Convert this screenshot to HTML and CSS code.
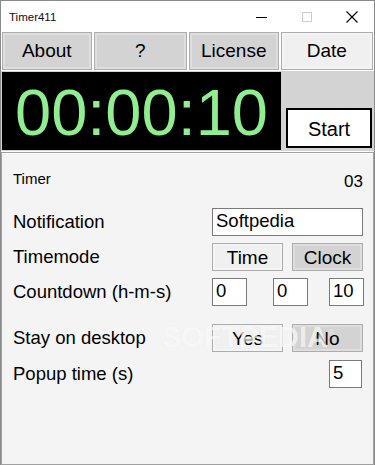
FILE: index.html
```html
<!DOCTYPE html>
<html lang="en">
<head>
  <meta charset="UTF-8">
  <title>Timer411</title>
  <link rel="stylesheet" href="styles.css">
</head>
<body>
  <div class="window">
    <div class="titlebar">
      <span class="title">Timer411</span>
      <div class="caption-buttons">
        <span class="cap-btn">
          <svg width="12" height="12" viewBox="0 0 12 12"><path d="M0 6.5h11" stroke="#000" stroke-width="1"/></svg>
        </span>
        <span class="cap-btn">
          <svg width="12" height="12" viewBox="0 0 12 12"><rect x="1.5" y="1.5" width="9" height="9" fill="none" stroke="#cccccc" stroke-width="1"/></svg>
        </span>
        <span class="cap-btn">
          <svg width="12" height="12" viewBox="0 0 12 12"><path d="M0.5 0.5l11 11M11.5 0.5l-11 11" stroke="#000" stroke-width="1.1"/></svg>
        </span>
      </div>
    </div>

    <div class="menu-row">
      <button class="btn menu-btn w-about">About</button>
      <button class="btn menu-btn w-help">?</button>
      <button class="btn menu-btn w-license">License</button>
      <button class="btn menu-btn light w-date">Date</button>
    </div>

    <div class="display-row">
      <div class="clock">00:00:10</div>
      <div class="start-area">
        <button class="start-btn">Start</button>
      </div>
    </div>

    <div class="panel">
      <div class="row row-timer">
        <span class="small-label">Timer</span>
        <span class="timer-no">03</span>
      </div>

      <div class="row">
        <span class="label">Notification</span>
        <input class="field wide" type="text" value="Softpedia">
      </div>

      <div class="row">
        <span class="label">Timemode</span>
        <div class="pair">
          <button class="btn toggle light">Time</button>
          <button class="btn toggle">Clock</button>
        </div>
      </div>

      <div class="row">
        <span class="label">Countdown (h-m-s)</span>
        <div class="hms">
          <input class="field small" type="text" value="0">
          <input class="field small mid" type="text" value="0">
          <input class="field small last" type="text" value="10">
        </div>
      </div>

      <div class="row row-gap">
        <span class="label">Stay on desktop</span>
        <div class="pair">
          <button class="btn toggle light">Yes</button>
          <button class="btn toggle">No</button>
        </div>
      </div>

      <div class="row row-popup">
        <span class="label">Popup time (s)</span>
        <input class="field popup" type="text" value="5">
      </div>

      <div class="watermark">SOFTPEDIA<sup>®</sup></div>
    </div>
  </div>
</body>
</html>
```

FILE: styles.css
```css
body {
  margin: 0;
  font-family: "Liberation Sans", Arial, sans-serif;
  background: #ffffff;
}

.window {
  width: 375px;
  height: 465px;
  box-sizing: border-box;
  border: 1px solid #8a8a8a;
  border-bottom: none;
  background: #ffffff;
  display: flex;
  flex-direction: column;
}

/* title bar */
.titlebar {
  height: 31px;
  display: flex;
  align-items: center;
  justify-content: space-between;
  padding-left: 8px;
}

.title {
  font-size: 11.5px;
  color: #1a0a14;
}

.caption-buttons {
  display: flex;
  height: 100%;
}

.cap-btn {
  width: 45px;
  display: flex;
  align-items: center;
  justify-content: center;
}

/* shared button look */
.btn {
  font-family: "Liberation Sans", Arial, sans-serif;
  color: #000;
  background: #d3d3d3;
  border: 1px solid #adadad;
  box-shadow: inset 0 0 0 2px #dedede;
  padding: 0;
  margin: 0;
  cursor: pointer;
}

.btn.light {
  background: #f0f0f0;
  box-shadow: inset 0 0 0 2px #f4f4f4;
}

/* top menu */
.menu-row {
  display: flex;
  gap: 2px;
  padding: 0 1px;
  height: 38px;
}

.menu-btn {
  font-size: 19px;
  height: 38px;
}

.w-about { width: 90px; }
.w-help { width: 94px; }
.w-license { width: 90px; }
.w-date { width: 93px; }

/* clock display */
.display-row {
  display: flex;
  height: 80px;
  margin-top: 1px;
  background: #d3d3d3;
}

.clock {
  width: 279px;
  margin: 1px 0 1px 1px;
  background: #000;
  color: #90ee90;
  font-size: 65px;
  display: flex;
  align-items: center;
  justify-content: center;
  padding-top: 2px;
  box-sizing: border-box;
}

.start-area {
  flex: 1;
  display: flex;
  align-items: flex-end;
  justify-content: center;
  padding: 0 2px 3px 5px;
}

.start-btn {
  width: 86px;
  height: 40px;
  background: #ffffff;
  border: 2px solid #000;
  font-family: "Liberation Sans", Arial, sans-serif;
  font-size: 20px;
  padding: 2px 0 0 0;
}

/* settings panel */
.panel {
  position: relative;
  flex: 1;
  background: #f4f4f4;
  border: 1px solid #a0a0a0;
  box-shadow: inset 0 1px 0 #ffffff;
  margin-top: 1px;
  padding: 17px 10px 0 11px;
  display: flex;
  flex-direction: column;
  gap: 7px;
  overflow: hidden;
}

.row {
  display: flex;
  align-items: center;
  justify-content: space-between;
  height: 28px;
}

.row-timer {
  height: 20px;
  margin-bottom: 11px;
}

.row-gap {
  margin-top: 11px;
}

.row-popup {
  margin-top: 1px;
}

.small-label {
  font-size: 15px;
  margin-top: -3px;
}

.timer-no {
  font-size: 17px;
  margin-top: 4px;
}

.label {
  font-size: 18.5px;
}

.field {
  box-sizing: border-box;
  height: 28px;
  border: 1px solid #7a7a7a;
  background: #ffffff;
  font-family: "Liberation Sans", Arial, sans-serif;
  font-size: 18.5px;
  padding: 0 0 2px 3px;
  margin: 0;
  outline: none;
}

.field.wide {
  width: 151px;
}

.field.small {
  width: 35px;
}

.field.mid {
  margin-left: 26px;
}

.field.last {
  margin-left: 21px;
}

.field.popup {
  width: 33px;
  margin-right: 1px;
}

.pair {
  width: 151px;
  display: flex;
  justify-content: space-between;
}

.toggle {
  width: 71px;
  height: 28px;
  font-size: 19px;
  padding-top: 2px;
}

.hms {
  width: 151px;
  display: flex;
}

.watermark {
  position: absolute;
  left: 160px;
  top: 168px;
  font-size: 29px;
  font-weight: bold;
  color: rgba(255, 255, 255, 0.7);
  text-shadow: 0 0 1px rgba(0, 0, 0, 0.06);
  pointer-events: none;
}

.watermark sup {
  font-size: 9px;
  font-weight: normal;
}
```
